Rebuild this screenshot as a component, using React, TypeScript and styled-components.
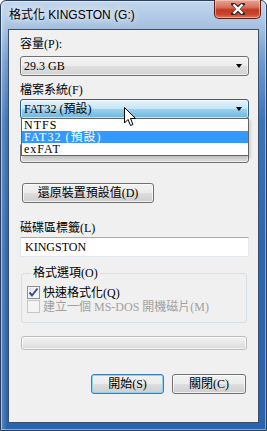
import React from "react";
import styled, { createGlobalStyle, css } from "styled-components";

const Global = createGlobalStyle`
  html, body { margin: 0; padding: 0; background: #ffffff; }
  * { box-sizing: border-box; }
`;

const uiFont = `"Liberation Serif", "Noto Sans CJK TC", serif`;

const Window = styled.div`
  position: relative;
  width: 267px;
  height: 431px;
  display: flex;
  flex-direction: column;
  padding: 0 7px 7px 7px;
  border-radius: 6px 6px 0 0;
  border: 1px solid #2a3f5c;
  background:
    linear-gradient(90deg, rgba(255,255,255,0.25) 0, rgba(255,255,255,0) 6px),
    linear-gradient(180deg, #c2d6ec 0, #a9c3e1 24px, #6f9bcf 60px, #3a74ba 120px, #2d67b0 240px, #2a63ad 100%);
  box-shadow: inset 0 0 0 1px rgba(255,255,255,0.45);
`;

const TitleBar = styled.div`
  height: 29px;
  display: flex;
  align-items: flex-start;
  margin-top: -1px;
`;

const Title = styled.div`
  margin-top: 9px;
  padding-left: 1px;
  font-family: "Liberation Sans", "Noto Sans CJK TC", sans-serif;
  font-size: 12px;
  line-height: 13px;
  color: #000;
  text-shadow: 0 0 6px #fff, 0 0 10px rgba(255,255,255,0.9);
`;

const CloseButton = styled.div`
  margin-left: auto;
  margin-right: -2px;
  width: 47px;
  height: 19px;
  display: flex;
  align-items: center;
  justify-content: center;
  border: 1px solid #5a1f1a;
  border-top: none;
  border-radius: 0 0 5px 5px;
  background: linear-gradient(180deg, #e8a493 0, #d7715e 40%, #c2391f 55%, #c9452c 80%, #e07b5e 100%);
  box-shadow: inset 0 0 0 1px rgba(255,220,210,0.5);
`;

const Client = styled.div`
  flex: 1;
  display: flex;
  flex-direction: column;
  padding: 7px 9px 0 11px;
  background: #f0f0f0;
  border: 1px solid #3b4f6b;
  font-family: ${uiFont};
  font-size: 12px;
  color: #000;
`;

const Label = styled.div<{ $mt: number }>`
  margin-top: ${(p) => p.$mt}px;
  height: 14px;
  line-height: 14px;
  white-space: nowrap;
`;

const Field = styled.div<{ $mt: number }>`
  position: relative;
  margin-top: ${(p) => p.$mt}px;
`;

const comboIdle = css`
  border-color: #707070;
  background: linear-gradient(180deg, #f3f3f3 0, #ececec 48%, #dedede 52%, #d4d4d4 100%);
`;
const comboPressed = css`
  border-color: #2c628b;
  background: linear-gradient(180deg, #e5f4fc 0, #c4e5f6 48%, #98d1ef 52%, #6db6dd 100%);
`;

const Combo = styled.div<{ $pressed?: boolean }>`
  height: 20px;
  display: flex;
  align-items: center;
  padding: 0 6px 0 3px;
  border: 1px solid;
  border-radius: 3px;
  box-shadow: inset 0 0 0 1px rgba(255,255,255,0.6);
  ${(p) => (p.$pressed ? comboPressed : comboIdle)}
`;

const ComboText = styled.span`
  flex: 1;
  line-height: 16px;
  white-space: nowrap;
`;

const Arrow = styled.span`
  width: 0;
  height: 0;
  border-left: 3.5px solid transparent;
  border-right: 3.5px solid transparent;
  border-top: 4px solid #000;
`;

const DropList = styled.div`
  position: absolute;
  top: calc(100% - 1px);
  left: 1px;
  right: 0;
  z-index: 2;
  background: #fff;
  border: 1px solid #646464;
  box-shadow: 2px 2px 2px rgba(0,0,0,0.12);
`;

const DropItem = styled.div<{ $selected?: boolean }>`
  height: 12px;
  line-height: 12px;
  padding-left: 2px;
  letter-spacing: 1px;
  background: ${(p) => (p.$selected ? "#3399ff" : "transparent")};
  color: ${(p) => (p.$selected ? "#fff" : "#000")};
`;

const Cursor = styled.svg`
  position: absolute;
  left: 104px;
  top: 8px;
  z-index: 3;
`;

const Button = styled.div<{ $w: number; $default?: boolean }>`
  width: ${(p) => p.$w}px;
  height: 20px;
  display: flex;
  align-items: center;
  justify-content: center;
  border: 1px solid ${(p) => (p.$default ? "#3c7fb1" : "#707070")};
  border-radius: 3px;
  background: linear-gradient(180deg, #f2f2f2 0, #ebebeb 48%, #dddddd 52%, #cfcfcf 100%);
  box-shadow: inset 0 0 0 1px ${(p) => (p.$default ? "#8fd2f5" : "rgba(255,255,255,0.7)")};
  line-height: 14px;
  white-space: nowrap;
`;

const RestoreRow = styled.div`
  margin-top: 20px;
  padding-left: 2px;
`;

const TextBox = styled.div`
  height: 20px;
  display: flex;
  align-items: center;
  padding-left: 4px;
  background: #fff;
  border: 1px solid #e3e9ef;
  border-top-color: #abadb3;
`;

const Group = styled.fieldset`
  margin: 9px 2px 0 1px;
  padding: 5px 0 9px 5px;
  border: 1px solid #d5dfe5;
  border-radius: 3px;
  min-width: 0;
`;

const Legend = styled.legend`
  margin-left: 4px;
  padding: 0 2px;
  line-height: 14px;
`;

const CheckRow = styled.div<{ $disabled?: boolean }>`
  display: flex;
  align-items: center;
  gap: 3px;
  height: 14px;
  white-space: nowrap;
  color: ${(p) => (p.$disabled ? "#a0a0a0" : "#000")};
`;

const CheckBox = styled.span<{ $disabled?: boolean }>`
  width: 13px;
  height: 13px;
  display: flex;
  align-items: center;
  justify-content: center;
  border: 1px solid ${(p) => (p.$disabled ? "#c6c6c6" : "#8e8f8f")};
  background: ${(p) =>
    p.$disabled
      ? "#f4f4f4"
      : "linear-gradient(135deg, #dcdcdc 0, #f6f6f6 60%, #ffffff 100%)"};
  box-shadow: inset 0 0 0 1px #f4f4f4;
`;

const Progress = styled.div`
  margin: 13px 2px 0 1px;
  height: 14px;
  border: 1px solid #bcbcbc;
  border-radius: 3px;
  background: linear-gradient(180deg, #f3f3f3 0, #e8e8e8 50%, #dadada 100%);
  box-shadow: inset 0 0 0 1px rgba(255,255,255,0.7);
`;

const Footer = styled.div`
  margin-top: 24px;
  padding-right: 3px;
  display: flex;
  justify-content: flex-end;
  gap: 8px;
`;

export default function App() {
  return (
    <>
      <Global />
      <Window>
        <TitleBar>
          <Title>格式化 KINGSTON (G:)</Title>
          <CloseButton>
            <svg width="14" height="12" viewBox="0 0 14 12">
              <path
                d="M2 1 L7 5 L12 1 M2 11 L7 7 L12 11"
                fill="none"
                stroke="#3a2a2a"
                strokeWidth="4"
                strokeLinecap="square"
              />
              <path
                d="M2.5 1.5 L11.5 10.5 M11.5 1.5 L2.5 10.5"
                fill="none"
                stroke="#ffffff"
                strokeWidth="2.4"
              />
            </svg>
          </CloseButton>
        </TitleBar>
        <Client>
          <Label $mt={0}>容量(P):</Label>
          <Field $mt={5}>
            <Combo>
              <ComboText>29.3 GB</ComboText>
              <Arrow />
            </Combo>
          </Field>

          <Label $mt={7}>檔案系統(F)</Label>
          <Field $mt={2}>
            <Combo $pressed>
              <ComboText>FAT32 (預設)</ComboText>
              <Arrow />
            </Combo>
            <DropList>
              <DropItem>NTFS</DropItem>
              <DropItem $selected>FAT32 (預設)</DropItem>
              <DropItem>exFAT</DropItem>
            </DropList>
            <Cursor width="13" height="20" viewBox="0 0 13 20">
              <path
                d="M0.5 0.5 L0.5 16 L4 12.5 L6.5 18.5 L9 17.5 L6.5 11.5 L11.5 11.5 Z"
                fill="#ffffff"
                stroke="#000000"
                strokeWidth="1"
                strokeLinejoin="miter"
              />
            </Cursor>
          </Field>

          {/* allocation-size label and combo, covered by the open list */}
          <Label $mt={8} aria-hidden />
          <Field $mt={2}>
            <Combo />
          </Field>

          <RestoreRow>
            <Button $w={132}>還原裝置預設值(D)</Button>
          </RestoreRow>

          <Label $mt={18}>磁碟區標籤(L)</Label>
          <Field $mt={2}>
            <TextBox>KINGSTON</TextBox>
          </Field>

          <Group>
            <Legend>格式選項(O)</Legend>
            <CheckRow>
              <CheckBox>
                <svg width="11" height="11" viewBox="0 0 11 11">
                  <path
                    d="M1.5 5.5 L4 8.5 L9.5 1.5"
                    fill="none"
                    stroke="#34519c"
                    strokeWidth="2"
                  />
                </svg>
              </CheckBox>
              快速格式化(Q)
            </CheckRow>
            <CheckRow $disabled>
              <CheckBox $disabled />
              建立一個 MS-DOS 開機磁片(M)
            </CheckRow>
          </Group>

          <Progress />

          <Footer>
            <Button $w={73} $default>開始(S)</Button>
            <Button $w={74}>關閉(C)</Button>
          </Footer>
        </Client>
      </Window>
    </>
  );
}
